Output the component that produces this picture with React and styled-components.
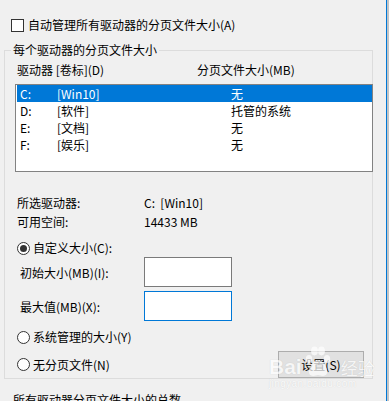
import React from 'react'
import styled, { createGlobalStyle } from 'styled-components'

const GlobalStyle = createGlobalStyle`
	html, body {
		margin: 0;
		padding: 0;
		background: #f0f0f0;
	}
	body {
		font-family: "Noto Sans CJK SC", "Noto Sans", sans-serif;
		font-size: 12px;
		color: #000;
	}
`

const drives = [
	{ letter: 'C:', label: '[Win10]', size: '无', selected: true },
	{ letter: 'D:', label: '[软件]', size: '托管的系统' },
	{ letter: 'E:', label: '[文档]', size: '无' },
	{ letter: 'F:', label: '[娱乐]', size: '无' },
]

const Paw = () => (
	<svg width='26' height='32' viewBox='0 0 26 32'>
		<g fill='#fff'>
			<ellipse cx='4' cy='13' rx='3.2' ry='4' />
			<ellipse cx='9.5' cy='5' rx='3.4' ry='4.4' />
			<ellipse cx='16.5' cy='5' rx='3.4' ry='4.4' />
			<ellipse cx='22' cy='13' rx='3.2' ry='4' />
			<path d='M13 14 C8 14 3 22 4 27 C5 31 10 30 13 29 C16 30 21 31 22 27 C23 22 18 14 13 14 Z' />
		</g>
	</svg>
)

export default function App() {
	return (
		<>
			<GlobalStyle />
			<Frame>
				<Panel>
					<CheckRow>
						<Checkbox />
						<span>自动管理所有驱动器的分页文件大小(A)</span>
					</CheckRow>

					<Group>
						<Legend>每个驱动器的分页文件大小</Legend>
						<Header>
							<span>驱动器 [卷标](D)</span>
							<span>分页文件大小(MB)</span>
						</Header>
						<List>
							{drives.map(d => (
								<Row key={d.letter} $selected={d.selected}>
									<span>{d.letter}</span>
									<span>{d.label}</span>
									<span>{d.size}</span>
								</Row>
							))}
						</List>

						<Info>
							<span>所选驱动器:</span>
							<span>C:&nbsp;&nbsp;[Win10]</span>
							<span>可用空间:</span>
							<span>14433 MB</span>
						</Info>

						<RadioRow $top={8}>
							<Radio $checked />
							<span>自定义大小(C):</span>
						</RadioRow>
						<SizeRow $top={0}>
							<span>初始大小(MB)(I):</span>
							<SizeInput />
						</SizeRow>
						<SizeRow $top={4}>
							<span>最大值(MB)(X):</span>
							<SizeInput $focused />
						</SizeRow>
						<RadioRow $top={7}>
							<Radio />
							<span>系统管理的大小(Y)</span>
						</RadioRow>
						<LastRow>
							<RadioLine>
								<Radio />
								<span>无分页文件(N)</span>
							</RadioLine>
							<SetButton type='button'>设置(S)</SetButton>
						</LastRow>
					</Group>

					<Footer>所有驱动器分页文件大小的总数</Footer>

					<Watermark>
						<MarkLine>
							<MarkLatin>Bai</MarkLatin>
							<Paw />
							<MarkCjk>经验</MarkCjk>
						</MarkLine>
						<MarkUrl>jingyan.baidu.com</MarkUrl>
					</Watermark>
				</Panel>
			</Frame>
		</>
	)
}

const Frame = styled.div`
	width: 389px;
	height: 401px;
	display: flex;
	overflow: hidden;
	background: #c4c4c4;
`

const Panel = styled.div`
	position: relative;
	width: 386px;
	flex: none;
	display: flex;
	flex-direction: column;
	background: #f0f0f0;
	border-right: 1px solid #0078d7;
`

const CheckRow = styled.div`
	display: flex;
	align-items: center;
	gap: 4px;
	height: 16px;
	line-height: 16px;
	margin: 17px 0 0 11px;
`

const Checkbox = styled.div`
	width: 13px;
	height: 13px;
	box-sizing: border-box;
	border: 1px solid #333;
	background: #fff;
`

const Group = styled.div`
	position: relative;
	display: flex;
	flex-direction: column;
	width: 369px;
	height: 336px;
	box-sizing: border-box;
	margin: 17px 0 0 4px;
	padding-top: 11px;
	border: 1px solid #dcdcdc;
`

const Legend = styled.span`
	position: absolute;
	top: -9px;
	left: 6px;
	padding: 0 2px;
	line-height: 16px;
	background: #f0f0f0;
`

const Header = styled.div`
	display: grid;
	grid-template-columns: 180px 1fr;
	padding-left: 12px;
	line-height: 16px;
`

const List = styled.div`
	height: 88px;
	box-sizing: border-box;
	margin: 6px -1px 0 10px;
	padding: 0 0 0 1px;
	border: 1px solid #828282;
	background: #fff;
`

const Row = styled.div`
	display: grid;
	grid-template-columns: 37px 174px 1fr;
	height: 17px;
	line-height: 17px;
	padding-left: 3px;
	background: ${p => (p.$selected ? '#0078d7' : 'transparent')};
	color: ${p => (p.$selected ? '#fff' : '#000')};
`

const Info = styled.div`
	display: grid;
	grid-template-columns: 127px 1fr;
	grid-auto-rows: 19px;
	align-items: center;
	margin-top: 21px;
	padding-left: 12px;
`

const RadioLine = styled.div`
	display: flex;
	align-items: center;
	gap: 3px;
	height: 18px;
	line-height: 18px;
`

const RadioRow = styled(RadioLine)`
	margin-top: ${p => p.$top}px;
	padding-left: 12px;
`

const Radio = styled.div`
	position: relative;
	width: 13px;
	height: 13px;
	box-sizing: border-box;
	border: 1px solid #333;
	border-radius: 50%;
	background: #fff;
	&::after {
		content: '';
		display: ${p => (p.$checked ? 'block' : 'none')};
		position: absolute;
		left: 2px;
		top: 2px;
		width: 7px;
		height: 7px;
		border-radius: 50%;
		background: #333;
	}
`

const SizeRow = styled.div`
	display: grid;
	grid-template-columns: 124px 88px;
	align-items: center;
	height: 30px;
	margin-top: ${p => p.$top}px;
	padding-left: 15px;
`

const SizeInput = styled.div`
	width: 88px;
	height: 30px;
	box-sizing: border-box;
	border: 1px solid ${p => (p.$focused ? '#0078d7' : '#7a7a7a')};
	background: #fff;
`

const LastRow = styled.div`
	display: flex;
	align-items: center;
	justify-content: space-between;
	margin-top: 5px;
	padding: 0 8px 0 12px;
`

const SetButton = styled.button`
	width: 86px;
	height: 27px;
	padding: 0;
	border: 1px solid #adadad;
	background: #e1e1e1;
	color: #000;
	font-family: inherit;
	font-size: 12px;
`

const Footer = styled.div`
	margin: 13px 0 0 13px;
	line-height: 16px;
`

const Watermark = styled.div`
	position: absolute;
	left: 269px;
	top: 345px;
	display: flex;
	flex-direction: column;
	align-items: flex-start;
	opacity: 0.7;
	pointer-events: none;
	color: #fff;
	text-shadow: 0 0 1px rgba(0, 0, 0, 0.2);
`

const MarkLine = styled.div`
	display: flex;
	align-items: flex-end;
	height: 33px;
`

const MarkLatin = styled.span`
	font-family: "Liberation Sans", sans-serif;
	font-weight: bold;
	font-size: 21px;
	line-height: 22px;
	margin-right: 3px;
`

const MarkCjk = styled.span`
	font-size: 17px;
	line-height: 21px;
	margin-left: 10px;
`

const MarkUrl = styled.span`
	font-family: "Liberation Sans", sans-serif;
	font-size: 10px;
	line-height: 10px;
	margin-top: 1px;
	letter-spacing: 0.4px;
`
